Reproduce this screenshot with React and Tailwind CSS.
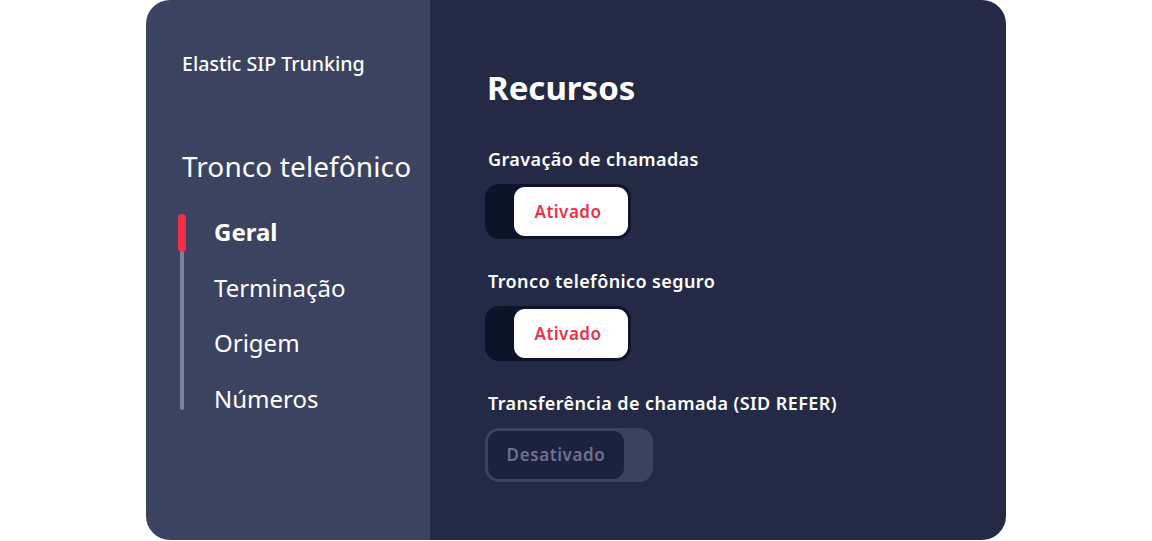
import React from "react";

const font = { fontFamily: '"Noto Sans", "Open Sans", sans-serif' };

function Toggle({ on }) {
  if (on) {
    return (
      <div className="flex h-[55px] w-[146px] justify-end rounded-[14px] bg-[#0c1429] p-[3px]">
        <div className="flex h-full w-[114px] items-center justify-center rounded-[11px] bg-white pr-[6px] text-[17px] font-semibold tracking-[0.5px] text-[#f22f46]">
          Ativado
        </div>
      </div>
    );
  }
  return (
    <div className="flex h-[54px] w-[168px] justify-start rounded-[14px] bg-[#3a425f] p-[3px]">
      <div className="flex h-full w-[136px] items-center justify-center rounded-[11px] bg-[#1c2140] text-[17px] font-semibold tracking-[0.6px] text-[#6a7191]">
        Desativado
      </div>
    </div>
  );
}

export default function App() {
  const items = ["Geral", "Terminação", "Origem", "Números"];
  return (
    <div className="flex h-[541px] w-full justify-center bg-white" style={font}>
      <div className="flex h-[540px] w-[860px] overflow-hidden rounded-[24px]">
        <aside className="flex w-[284px] flex-col bg-[#3b4361] pl-[36px] pt-[50px] text-white">
          <div className="text-[19.6px] font-medium leading-[28px]">Elastic SIP Trunking</div>
          <div className="mt-[70px] text-[28px] leading-[36px] tracking-[0.1px]">Tronco telefônico</div>
          <div className="relative mt-[20px] flex flex-col">
            <div className="absolute left-[-2px] top-[14px] h-[192px] w-[4px] rounded-full bg-[#7c8299]" />
            <div className="absolute left-[-4px] top-[10px] h-[38px] w-[8px] rounded-full bg-[#f22f46]" />
            {items.map((t, i) => (
              <div
                key={t}
                className={
                  "h-[55.5px] pl-[32px] text-[24px] leading-[55px] " +
                  (i === 0 ? "font-bold" : "font-normal")
                }
              >
                {t}
              </div>
            ))}
          </div>
        </aside>
        <main className="flex flex-1 flex-col bg-[#242a46] pl-[55px] pt-[66px] text-white">
          <h1 className="pl-[2px] text-[33px] font-bold leading-[44px]">Recursos</h1>
          <div className="mt-[36px] pl-[3px] text-[18px] font-semibold leading-[26px] tracking-[0.4px]">Gravação de chamadas</div>
          <div className="mt-[12px]">
            <Toggle on />
          </div>
          <div className="mt-[29px] pl-[3px] text-[18px] font-semibold leading-[26px] tracking-[0.4px]">Tronco telefônico seguro</div>
          <div className="mt-[12px]">
            <Toggle on />
          </div>
          <div className="mt-[29px] pl-[3px] text-[18px] font-semibold leading-[26px] tracking-[0.4px]">
            Transferência de chamada (SID REFER)
          </div>
          <div className="mt-[12px]">
            <Toggle on={false} />
          </div>
        </main>
      </div>
    </div>
  );
}
